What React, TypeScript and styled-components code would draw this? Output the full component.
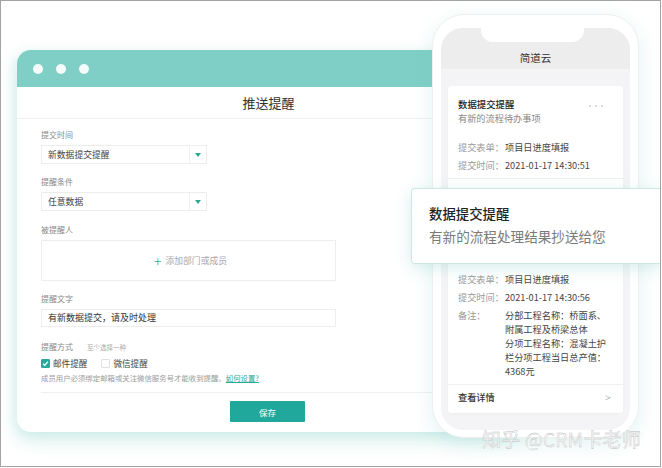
import React from 'react';
import styled, { createGlobalStyle } from 'styled-components';

const GlobalStyle = createGlobalStyle`
  html, body {
    margin: 0;
    padding: 0;
    background: #ffffff;
  }
  body {
    font-family: "Noto Sans CJK SC", "Noto Sans", "Liberation Sans", sans-serif;
    color: #333;
  }
  * {
    box-sizing: border-box;
  }
`;

const Frame = styled.div`
  position: relative;
  width: 661px;
  height: 467px;
  border: 1px solid #a3a3a3;
  background: #ffffff;
  overflow: hidden;
  padding: 49px 0 0 16px;
`;

const Window = styled.div`
  width: 503px;
  background: #ffffff;
  border-radius: 14px;
  box-shadow: 0 9px 18px rgba(120, 205, 195, 0.3), -4px 2px 12px rgba(120, 205, 195, 0.15);
  overflow: hidden;
`;

const WindowBar = styled.div`
  height: 37px;
  background: #7fcfc6;
  display: flex;
  align-items: center;
  gap: 13px;
  padding-left: 16px;
`;

const Dot = styled.span`
  width: 10px;
  height: 10px;
  border-radius: 50%;
  background: #f4fbfa;
`;

const TitleRow = styled.div`
  height: 32px;
  border-bottom: 1px solid #f0f0f0;
  display: flex;
  align-items: center;
  justify-content: center;
  font-size: 13px;
  color: #333;
`;

const Form = styled.div`
  padding: 10px 23px 0 24px;
`;

const Group = styled.div<{ gap?: number }>`
  margin-top: ${p => p.gap ?? 0}px;
`;

const Label = styled.div`
  font-size: 8px;
  line-height: 12px;
  color: #8a8a8a;
  margin-bottom: 4px;
  display: flex;
  align-items: baseline;
  gap: 14px;
`;

const Hint = styled.span`
  font-size: 6.5px;
  color: #aaa;
`;

const Select = styled.div`
  width: 166px;
  height: 19px;
  border: 1px solid #ededed;
  display: flex;
  align-items: stretch;
`;

const SelectText = styled.div`
  flex: 1;
  font-size: 8.8px;
  line-height: 17px;
  color: #444;
  padding-left: 6px;
`;

const SelectArrow = styled.div`
  width: 17px;
  border-left: 1px solid #f0f0f0;
  display: flex;
  align-items: center;
  justify-content: center;

  &::after {
    content: '';
    border-left: 3px solid transparent;
    border-right: 3px solid transparent;
    border-top: 4px solid #2aa89c;
  }
`;

const AddBox = styled.div`
  width: 295px;
  height: 41px;
  border: 1px solid #ededed;
  display: flex;
  align-items: center;
  justify-content: center;
  gap: 4px;
  font-size: 8.8px;
  color: #a8a8a8;
  padding-left: 4px;
`;

const Plus = styled.span`
  color: #2aa89c;
  font-size: 14px;
  line-height: 14px;
  font-weight: 300;
`;

const TextInput = styled.div`
  width: 295px;
  height: 18px;
  border: 1px solid #ededed;
  font-size: 9px;
  line-height: 16px;
  color: #333;
  padding-left: 6px;
`;

const CheckRow = styled.div`
  display: flex;
  align-items: center;
  height: 12px;
  font-size: 8.6px;
  color: #444;
`;

const CheckBox = styled.span<{ checked?: boolean }>`
  width: 9px;
  height: 9px;
  border-radius: 1px;
  margin-right: 3px;
  display: inline-flex;
  align-items: center;
  justify-content: center;
  background: ${p => (p.checked ? '#2aa89c' : '#fff')};
  border: 1px solid ${p => (p.checked ? '#2aa89c' : '#e0e0e0')};
`;

const CheckLabel = styled.span`
  margin-right: 14px;
`;

const Notice = styled.div`
  margin-top: 3px;
  font-size: 7.4px;
  line-height: 12px;
  color: #9a9a9a;

  a {
    color: #2aa89c;
    text-decoration: underline;
  }
`;

const Divider = styled.div`
  margin-top: 8px;
  height: 1px;
  background: #f0f0f0;
  margin-right: -40px;
`;

const Footer = styled.div`
  display: flex;
  justify-content: center;
  padding: 8px 0 10px;
`;

const SaveButton = styled.button`
  width: 75px;
  height: 21px;
  border: none;
  border-radius: 1px;
  background: #1fa89b;
  color: #fff;
  font-family: inherit;
  font-size: 8.5px;
  margin-right: 2px;
`;

const Phone = styled.div`
  position: absolute;
  left: 431px;
  top: 13px;
  width: 207px;
  height: 424px;
  background: #ffffff;
  border: 1px solid #eef0f0;
  border-radius: 32px;
  box-shadow: 0 6px 20px rgba(120, 200, 190, 0.22);
  padding: 13px 8px 7px 8px;
`;

const Screen = styled.div`
  height: 100%;
  background: #f4f4f6;
  border-radius: 22px;
  overflow: hidden;
`;

const ScreenHeader = styled.div`
  position: relative;
  height: 41px;
  background: #ededed;
  display: flex;
  align-items: flex-end;
  justify-content: center;
  padding-bottom: 4px;
  font-size: 10.5px;
  line-height: 14px;
  color: #333;

  &::before {
    content: '';
    position: absolute;
    top: 0;
    left: 40px;
    width: 103px;
    height: 14px;
    background: #ffffff;
    border-radius: 0 0 12px 12px;
  }
`;

const ScreenBody = styled.div`
  padding: 17px 7px 0 7px;
  display: flex;
  flex-direction: column;
  gap: 9px;
`;

const Card = styled.div`
  background: #ffffff;
  border-radius: 3px;
  box-shadow: 0 1px 3px rgba(0, 0, 0, 0.03);
`;

const CardHead = styled.div`
  position: relative;
  padding: 12px 10px 0 10px;
`;

const CardTitle = styled.div`
  font-size: 9.4px;
  line-height: 12px;
  font-weight: 500;
  color: #222;
`;

const CardSub = styled.div`
  margin-top: 2px;
  font-size: 9.2px;
  line-height: 12px;
  color: #888;
`;

const More = styled.span`
  position: absolute;
  right: 20px;
  top: 19px;
  display: flex;
  gap: 4px;

  i {
    width: 2px;
    height: 2px;
    border-radius: 50%;
    background: #cfcfcf;
  }
`;

const KvList = styled.div<{ top?: number }>`
  padding: ${p => p.top ?? 16}px 10px 0 10px;
  display: flex;
  flex-direction: column;
  gap: 4px;
`;

const Kv = styled.div`
  display: flex;
  font-size: 9.2px;
  line-height: 14px;
`;

const Key = styled.span`
  width: 47px;
  flex-shrink: 0;
  color: #999;
`;

const Value = styled.span`
  color: #444;
`;

const CardRule = styled.div`
  margin-top: 6px;
  height: 30px;
  border-top: 1px solid #f0f0f0;
`;

const CardFoot = styled.div`
  margin-top: 6px;
  border-top: 1px solid #f0f0f0;
  display: flex;
  justify-content: space-between;
  align-items: center;
  padding: 5px 12px 9px 10px;
  font-size: 9.2px;
  line-height: 14px;
  color: #333;
  font-weight: 500;
`;

const Chevron = styled.span`
  color: #999;
  font-weight: 300;
  font-size: 11px;
`;

const Toast = styled.div`
  position: absolute;
  left: 410px;
  top: 187px;
  width: 252px;
  height: 76px;
  background: #ffffff;
  border: 1px solid #cde7e3;
  border-radius: 3px;
  box-shadow: 0 4px 16px rgba(120, 200, 190, 0.3);
  padding: 15px 0 0 17px;
`;

const ToastTitle = styled.div`
  font-size: 13.4px;
  line-height: 18px;
  font-weight: 500;
  color: #222;
`;

const ToastText = styled.div`
  margin-top: 4px;
  font-size: 13.6px;
  line-height: 20px;
  color: #7a7a7a;
`;

const Watermark = styled.div`
  position: absolute;
  left: 481px;
  top: 425px;
  font-size: 19px;
  line-height: 26px;
  color: #f7f7f7;
  -webkit-text-stroke: 0.35px #bdbdbd;
  letter-spacing: 0.2px;
`;

const App: React.FC = () => {
  return (
    <>
      <GlobalStyle />
      <Frame>
        <Window>
          <WindowBar>
            <Dot />
            <Dot />
            <Dot />
          </WindowBar>
          <TitleRow>推送提醒</TitleRow>
          <Form>
            <Group>
              <Label>提交时间</Label>
              <Select>
                <SelectText>新数据提交提醒</SelectText>
                <SelectArrow />
              </Select>
            </Group>
            <Group gap={12}>
              <Label>提醒条件</Label>
              <Select>
                <SelectText>任意数据</SelectText>
                <SelectArrow />
              </Select>
            </Group>
            <Group gap={13}>
              <Label>被提醒人</Label>
              <AddBox>
                <Plus>+</Plus>
                添加部门或成员
              </AddBox>
            </Group>
            <Group gap={12}>
              <Label>提醒文字</Label>
              <TextInput>有新数据提交，请及时处理</TextInput>
            </Group>
            <Group gap={14}>
              <Label>
                提醒方式 <Hint>至少选择一种</Hint>
              </Label>
              <CheckRow>
                <CheckBox checked>
                  <svg width="7" height="7" viewBox="0 0 8 8">
                    <path d="M1.2 4.2 L3.2 6 L6.8 1.8" fill="none" stroke="#fff" strokeWidth="1.4" />
                  </svg>
                </CheckBox>
                <CheckLabel>邮件提醒</CheckLabel>
                <CheckBox />
                <CheckLabel>微信提醒</CheckLabel>
              </CheckRow>
              <Notice>
                成员用户必须绑定邮箱或关注微信服务号才能收到提醒。<a>如何设置?</a>
              </Notice>
            </Group>
            <Divider />
          </Form>
          <Footer>
            <SaveButton>保存</SaveButton>
          </Footer>
        </Window>

        <Phone>
          <Screen>
            <ScreenHeader>简道云</ScreenHeader>
            <ScreenBody>
              <Card>
                <CardHead>
                  <CardTitle>数据提交提醒</CardTitle>
                  <CardSub>有新的流程待办事项</CardSub>
                  <More>
                    <i />
                    <i />
                    <i />
                  </More>
                </CardHead>
                <KvList>
                  <Kv>
                    <Key>提交表单：</Key>
                    <Value>项目日进度填报</Value>
                  </Kv>
                  <Kv>
                    <Key>提交时间：</Key>
                    <Value>2021-01-17 14:30:51</Value>
                  </Kv>
                </KvList>
                <CardRule />
              </Card>
              <Card>
                <KvList top={55}>
                  <Kv>
                    <Key>提交表单：</Key>
                    <Value>项目日进度填报</Value>
                  </Kv>
                  <Kv>
                    <Key>提交时间：</Key>
                    <Value>2021-01-17 14:30:56</Value>
                  </Kv>
                  <Kv>
                    <Key>备注：</Key>
                    <Value>
                      分部工程名称：桥面系、
                      <br />
                      附属工程及桥梁总体
                      <br />
                      分项工程名称：混凝土护
                      <br />
                      栏分项工程当日总产值：
                      <br />
                      4368元
                    </Value>
                  </Kv>
                </KvList>
                <CardFoot>
                  查看详情
                  <Chevron>&gt;</Chevron>
                </CardFoot>
              </Card>
            </ScreenBody>
          </Screen>
        </Phone>

        <Toast>
          <ToastTitle>数据提交提醒</ToastTitle>
          <ToastText>有新的流程处理结果抄送给您</ToastText>
        </Toast>

        <Watermark>知乎 @CRM卡老师</Watermark>
      </Frame>
    </>
  );
};

export default App;
